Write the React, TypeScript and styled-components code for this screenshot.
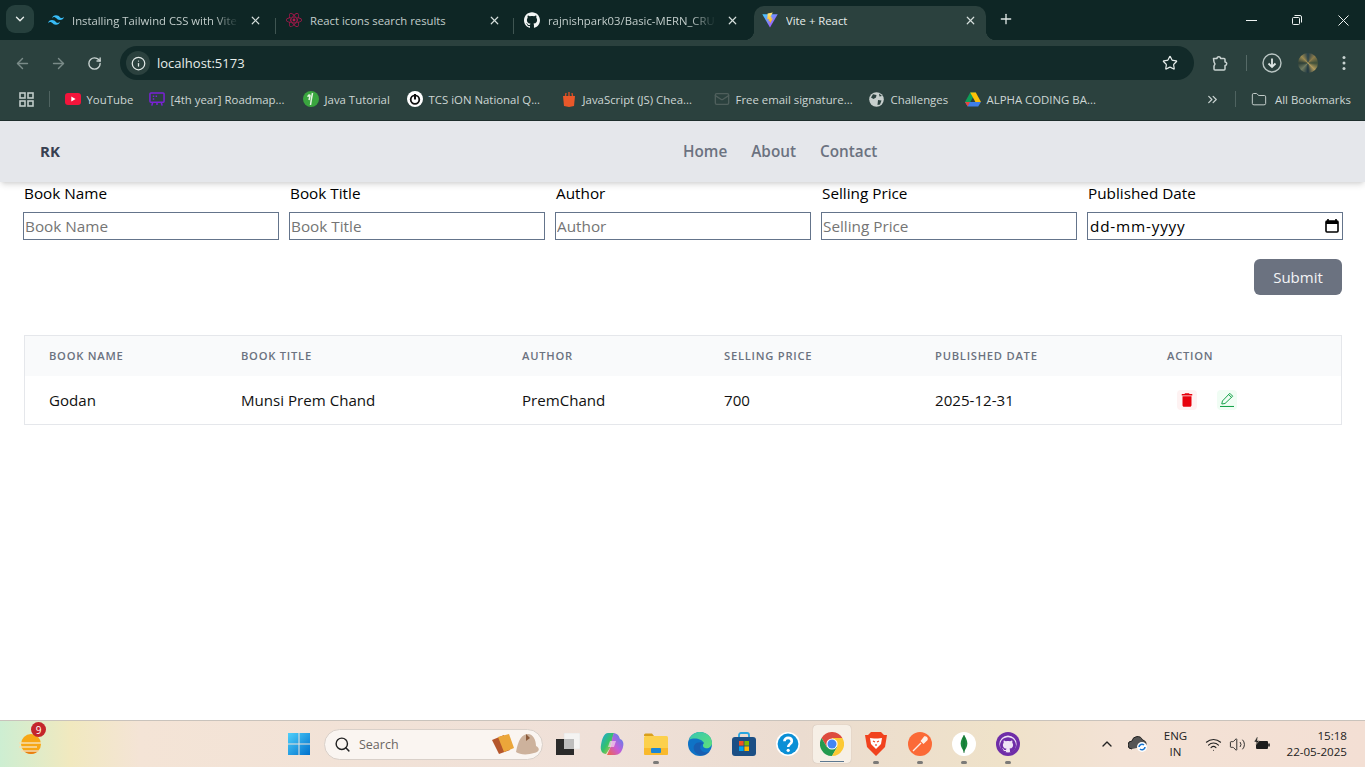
import React from "react";
import styled, { createGlobalStyle } from "styled-components";
import { SiTailwindcss, SiGithub } from "react-icons/si";
import { FaReact } from "react-icons/fa";
import { MdDelete } from "react-icons/md";
import { ChevronDown, X, Plus, ArrowLeft, ArrowRight, RotateCw, Info, Star, ChevronsRight, Folder, Mail, Search, ChevronUp, Wifi, Volume2 } from "lucide-react";

const Global = createGlobalStyle`
  html, body { margin: 0; padding: 0; height: 100%; background: #fff; }
  * { box-sizing: border-box; }
  #root { height: 100%; }
`;
const UI = `"Open Sans", "Noto Sans", sans-serif`;
const Screen = styled.div`display:flex;flex-direction:column;height:767px;overflow:hidden;font-family:${UI};color:#000;`;

/* Browser chrome */
const TabStrip = styled.div`height:40px;background:#0e2625;display:flex;align-items:flex-end;padding-left:6px;`;
const TabMenu = styled.div`width:28px;height:28px;margin:0 4px 7px 0;border-radius:9px;background:#26403d;color:#e8eeec;display:flex;align-items:center;justify-content:center;`;
const Tab = styled.div<{ $active?: boolean; $w: number; $pl?: number; $pr?: number }>`
  position:relative;width:${p => p.$w}px;height:34px;display:flex;align-items:center;padding:0 ${p => p.$pr ?? 9}px 6px ${p => p.$pl ?? 10}px;
  color:${p => p.$active ? "#e6ecea" : "#c2cdcb"};font-size:11.3px;
  background:${p => p.$active ? "#2b413e" : "transparent"};
  border-radius:${p => p.$active ? "10px 10px 0 0" : "0"};
  ${p => p.$active ? `
    &::before,&::after{content:"";position:absolute;bottom:0;width:10px;height:10px;}
    &::before{left:-10px;background:radial-gradient(circle at 0 0,transparent 10px,#2b413e 10.5px);}
    &::after{right:-10px;background:radial-gradient(circle at 100% 0,transparent 10px,#2b413e 10.5px);}` : ""}
`;
const TabIcon = styled.span`width:16px;height:16px;flex:none;display:flex;align-items:center;justify-content:center;margin-right:8px;`;
const TabTitle = styled.span<{ $fade?: boolean }>`flex:1;white-space:nowrap;overflow:hidden;
  ${p => p.$fade ? "mask-image:linear-gradient(90deg,#000 85%,transparent);" : ""}`;
const TabClose = styled.span`width:16px;height:16px;margin-left:8px;display:flex;align-items:center;justify-content:center;color:#d5dedc;flex:none;`;
const TabSep = styled.span`width:1px;height:16px;margin:0 0 6px;background:#3f5552;flex:none;`;
const NewTab = styled.div`width:20px;height:28px;margin:0 0 7px 10px;color:#dfe7e5;display:flex;align-items:center;justify-content:center;`;
const WinControls = styled.div`margin-left:auto;display:flex;height:40px;`;
const WinBtn = styled.div`width:46px;padding-left:2px;display:flex;align-items:center;justify-content:center;color:#eef3f2;`;

const Toolbar = styled.div`height:40px;background:#2b413e;display:flex;align-items:flex-start;padding:6px 0 0 4px;color:#c9d3d1;`;
const ToolBtn = styled.div<{ $dim?: boolean; $ml?: number }>`width:36px;height:34px;margin-left:${p => p.$ml ?? 0}px;display:flex;align-items:center;justify-content:center;color:${p => p.$dim ? "#7a8b88" : "#c9d3d1"};flex:none;`;
const Omnibox = styled.div`width:1074px;height:34px;margin-left:8px;border-radius:17px;background:#122a29;display:flex;align-items:center;padding:0 16px 0 6px;flex:none;`;
const InfoChip = styled.span`width:24px;height:24px;border-radius:50%;background:#2b413e;display:flex;align-items:center;justify-content:center;color:#e2e9e7;`;
const Url = styled.span`margin-left:7px;font-size:13px;color:#e8eeec;flex:1;`;
const ToolSep = styled.span`width:1px;height:16px;background:#566a67;margin:9px 7px 0 8px;flex:none;`;
const Avatar = styled.span`width:20px;height:20px;border-radius:50%;background:conic-gradient(#26404a,#8a7a4a,#3d4f3a,#b09a5c,#1e3640,#6f7a60,#2d3f38,#9c8a50,#26404a);`;

const Bookmarks = styled.div`height:41px;background:#2b413e;display:flex;align-items:center;padding:0 0 2px 19px;color:#cdd6d4;font-size:11.4px;border-bottom:1px solid #1f2f2d;`;
const AppsBtn = styled.span`width:15px;display:flex;color:#c0cbc9;flex:none;`;
const BarSep = styled.span`width:1px;height:16px;background:#4f6360;margin:0 7px 0 14.5px;flex:none;`;
const Bookmark = styled.div<{ $w: number; $gap?: number }>`width:${p => p.$w}px;padding:0 8px;display:flex;align-items:center;gap:${p => p.$gap ?? 6}px;white-space:nowrap;flex:none;overflow:hidden;`;
const BmIcon = styled.span`width:16px;height:16px;display:flex;align-items:center;justify-content:center;flex:none;`;
const Overflow = styled.span`margin-left:99px;width:16px;display:flex;color:#c9d3d1;flex:none;`;

/* Page */
const Nav = styled.nav`height:61px;flex:none;background:#e5e7eb;display:grid;grid-template-columns:643px auto;align-items:center;padding:0 0 2px 40px;box-shadow:0 4px 6px -1px rgba(0,0,0,.12),0 2px 4px -2px rgba(0,0,0,.1);position:relative;z-index:1;`;
const Brand = styled.span`font-size:15px;font-weight:700;color:#374151;`;
const NavLinks = styled.div`display:flex;gap:24px;`;
const NavLink = styled.a`font-size:15.3px;font-weight:600;color:#6b7280;`;
const Main = styled.main`flex:1;background:#fff;padding:0 22px 0 23px;`;
const FormGrid = styled.div`display:grid;grid-template-columns:repeat(5,256px);column-gap:10px;`;
const Field = styled.label`display:flex;flex-direction:column;font-size:15.3px;`;
const FieldName = styled.span`height:22px;margin-bottom:8px;padding-left:1px;line-height:22px;`;
const Input = styled.input`height:28px;width:100%;border:1px solid #64748b;border-radius:0;padding:0 1px;font:15.3px ${UI};outline:none;
  &::placeholder{color:#757575;opacity:1;}`;
const DateBox = styled.div`height:28px;border:1px solid #64748b;display:flex;align-items:center;justify-content:space-between;padding:0 3px 0 2px;font-size:15.3px;letter-spacing:.8px;`;
const Actions = styled.div`display:flex;justify-content:flex-end;padding:19px 1px 40px 0;`;
const Submit = styled.button`width:88px;height:36px;border:0;border-radius:6px;background:#6b7280;color:#f3f4f6;font:500 15px ${UI};`;
const TableWrap = styled.div`margin-left:1px;width:1318px;border:1px solid #e5e7eb;`;
const Table = styled.table`border-collapse:collapse;table-layout:fixed;width:1316px;`;
const Th = styled.th<{ $w: number }>`width:${p => p.$w}px;height:40px;background:#f9fafb;text-align:left;padding:0 0 2px 24px;font-size:11.2px;font-weight:600;letter-spacing:.75px;text-transform:uppercase;color:#6b7280;`;
const Td = styled.td`height:48px;padding:0 0 0 24px;font-size:15.1px;color:#111;`;
const ActionCell = styled.div`display:flex;gap:20px;margin:-1px 0 0 10px;`;
const IconBtn = styled.span<{ $bg: string; $c: string }>`width:20px;height:20px;border-radius:4px;background:${p => p.$bg};color:${p => p.$c};display:flex;align-items:center;justify-content:center;`;

/* Taskbar */
const Taskbar = styled.div`height:47px;flex:none;border-top:1px solid #c9c3bc;display:flex;align-items:center;background:linear-gradient(90deg,#cdeed2 0,#f1e9bf 70px,#f4e4d6 140px,#efe0d8 600px,#ebdcd0 800px,#efe2c9 1000px,#f3e2d5 1120px,#f3dfd4 100%);position:relative;`;
const Weather = styled.div`width:287px;padding-left:19px;flex:none;position:relative;display:flex;`;
const Badge = styled.span`position:absolute;left:31px;top:-10px;width:15px;height:15px;border-radius:50%;background:#c4262b;color:#fff;font-size:10px;display:flex;align-items:center;justify-content:center;`;
const TbIcon = styled.div<{ $w?: number; $active?: boolean; $dot?: boolean }>`position:relative;width:${p => p.$w ?? 44}px;height:38px;flex:none;display:flex;align-items:center;justify-content:center;
  ${p => p.$active ? "background:#f6efe6;border-radius:4px;box-shadow:0 0 1px rgba(0,0,0,.25);margin:0 3px;width:38px;" : ""}
  ${p => p.$dot ? `&::after{content:"";position:absolute;bottom:-1px;left:50%;margin-left:-3px;width:6px;height:3px;border-radius:2px;background:#7b7a78;}` : ""}
`;
const ActiveLine = styled.span`position:absolute;bottom:1px;left:7px;width:24px;height:1.5px;background:#5d7890;`;
const SearchPill = styled.div`width:219px;height:31px;margin:0 3px 0 2px;border-radius:16px;background:#faf5f1;border:1px solid #d9d0c9;display:flex;align-items:center;padding:0 0 0 9px;color:#6a6662;font-size:12.5px;flex:none;gap:8px;position:relative;`;
const PillArt = styled.span`margin-left:auto;display:flex;`;
const Tray = styled.div`margin-left:auto;display:flex;align-items:center;height:100%;color:#222;`;
const Lang = styled.div`width:30px;margin-right:11px;font-size:11.5px;line-height:16px;text-align:center;color:#222;`;
const Clock = styled.div`margin:0 18px 0 13px;font-size:11.6px;line-height:16px;text-align:right;color:#222;`;
const TrayIcon = styled.span<{ $w: number }>`width:${p => p.$w}px;display:flex;justify-content:center;`;

const ViteIcon = () => (
  <svg width="16" height="16" viewBox="0 0 16 16">
    <defs>
      <linearGradient id="vg" x1="0" y1="0" x2="1" y2="1"><stop offset="0" stopColor="#41d1ff" /><stop offset="1" stopColor="#bd34fe" /></linearGradient>
      <linearGradient id="vy" x1="0" y1="0" x2="0" y2="1"><stop offset="0" stopColor="#ffea83" /><stop offset="1" stopColor="#ffa800" /></linearGradient>
    </defs>
    <path d="M0.3 2.2 L15.7 2.2 L8 15.6 Z" fill="url(#vg)" />
    <path d="M10.8 0.4 L5.6 1.4 L5.3 7.5 L7 7.1 L6.6 9.4 L8.1 9 L7.7 12 L11 6.3 L9.2 6.7 L9.7 4.7 L8.4 4.9 Z" fill="url(#vy)" />
  </svg>
);
const Youtube = () => (
  <svg width="16" height="12" viewBox="0 0 16 12"><rect width="16" height="12" rx="3" fill="#f4143b" /><path d="M6.3 3.4 L10.6 6 L6.3 8.6 Z" fill="#fff" /></svg>
);
const Roadmap = () => (
  <svg width="17" height="16" viewBox="0 0 17 16" fill="none" stroke="#7a22d6" strokeWidth="1.6"><rect x="1" y="1.5" width="15" height="10" rx="1" /><path d="M4 11.5 L3 15 M8.5 11.5 V14.5 M13 11.5 L14 15" /><path d="M4 5 h1.6 M7 5 h1.6 M4 8 h1.6" /></svg>
);
const JavaIcon = () => (
  <svg width="16" height="16" viewBox="0 0 16 16"><circle cx="8" cy="8" r="8" fill="#3aa53f" /><path d="M9.5 2 L8.4 8 L7.5 14 M5 6 C5 3.5 7 3.5 7 5 L6 9" stroke="#e9f5e6" strokeWidth="1.5" fill="none" /></svg>
);
const Tcs = () => (
  <svg width="16" height="16" viewBox="0 0 16 16"><circle cx="8" cy="8" r="8" fill="#fff" /><circle cx="8" cy="8.6" r="4.3" fill="none" stroke="#111" strokeWidth="1.8" /><path d="M8 3 V8.4" stroke="#111" strokeWidth="2" /></svg>
);
const JsIcon = () => (
  <svg width="16" height="16" viewBox="0 0 16 16"><path d="M2 5 H14 L13 15 L8 16 L3 15 Z" fill="#e9582a" /><path d="M4.5 5 L5 2 M8 5 V1 M11.5 5 L11 2" stroke="#d94d22" strokeWidth="1.4" /></svg>
);
const Globe = () => (
  <svg width="15" height="15" viewBox="0 0 15 15"><circle cx="7.5" cy="7.5" r="7.3" fill="#c7cfcd" /><path d="M4 2.2 L7.5 3 L7 5.5 L4.5 7 L2 5.5 Z M9 8 L12.5 8.5 L11 12.5 L8.5 13 Z M10 1.5 L13 4 L10.5 4.5 Z" fill="#2b413e" /></svg>
);
const Drive = () => (
  <svg width="16" height="15" viewBox="0 0 16 15"><path d="M5.2 0.5 H10.8 L7.9 5.6 L5.3 10 H0 Z" fill="#0f9d58" /><path d="M5.2 0.5 H10.8 L16 10 H10.4 Z" fill="#ffc107" /><path d="M0 10 L5.3 10 H16 L13.2 14.6 H2.7 Z" fill="#3f7ee8" /><path d="M0 10 H5 L2.7 14.6 Z" fill="#e8453c" /></svg>
);
const WinLogo = () => (
  <svg width="22" height="22" viewBox="0 0 22 22"><defs><linearGradient id="w" x1="0" y1="0" x2="1" y2="1"><stop offset="0" stopColor="#4fd0fb" /><stop offset="1" stopColor="#0070cc" /></linearGradient></defs><path d="M0 0h10.5v10.5H0zM11.5 0H22v10.5H11.5zM0 11.5h10.5V22H0zM11.5 11.5H22V22H11.5z" fill="url(#w)" /></svg>
);
const WeatherIcon = () => (
  <svg width="24" height="24" viewBox="0 0 24 24"><circle cx="12" cy="12" r="10" fill="#f7a716" /><path d="M12 22 a10 10 0 0 0 8-4 H4 a10 10 0 0 0 8 4z" fill="#ea7f10" /><path d="M0 11 H22 M0 15 H18 M2 19 H20" stroke="#f6dfb0" strokeWidth="1.4" /></svg>
);
const TaskView = () => (
  <svg width="24" height="22" viewBox="0 0 24 22"><rect x="8" y="0" width="16" height="16" fill="#f4f3f2" stroke="#ddd" strokeWidth=".5" /><rect x="0" y="6" width="18" height="16" fill="#2a2a2a" /><rect x="8" y="6" width="10" height="10" fill="#bdbdbd" /></svg>
);
const Copilot = () => (
  <svg width="24" height="24" viewBox="0 0 24 24"><defs><linearGradient id="c1" x1="0" y1="0" x2="1" y2="1"><stop offset="0" stopColor="#1fa3e0" /><stop offset=".5" stopColor="#34c26c" /><stop offset="1" stopColor="#f6c338" /></linearGradient><linearGradient id="c2" x1="1" y1="0" x2="0" y2="1"><stop offset="0" stopColor="#3e8bf0" /><stop offset=".55" stopColor="#c85bd8" /><stop offset="1" stopColor="#f0683f" /></linearGradient></defs><path d="M8 1 H14 L10 16 L6 22 C2 22 0 18 1 13 C2 7 4 1 8 1Z" fill="url(#c1)" /><path d="M14 1 C18 2 19 4 20 7 C23 8 24 11 23 15 C22 20 19 23 15 23 H7 L11 14 C12 9 12 4 14 1Z" fill="url(#c2)" /><path d="M10 9 H16 L14 15 H8Z" fill="#f4d7ee" opacity=".7" /></svg>
);
const Files = () => (
  <svg width="24" height="22" viewBox="0 0 24 22"><path d="M0 2 a1.5 1.5 0 0 1 1.5-1.5 H8 L10 3 H0Z" fill="#d99f1c" /><rect y="3" width="24" height="19" rx="1.5" fill="#fcd04c" /><path d="M0 15 H24 V20.5 A1.5 1.5 0 0 1 22.5 22 H1.5 A1.5 1.5 0 0 1 0 20.5Z" fill="#f9b92c" /><rect x="7" y="15" width="10" height="5" rx="1" fill="#1a86d6" /></svg>
);
const Edge = () => (
  <svg width="24" height="24" viewBox="0 0 24 24"><defs><linearGradient id="e1" x1="0" y1="0" x2="1" y2="1"><stop offset="0" stopColor="#37c7b1" /><stop offset="1" stopColor="#5fe07a" /></linearGradient></defs><circle cx="12" cy="12" r="12" fill="#0f73c6" /><path d="M1 8 C3 2 8 0 12 0 C19 0 24 5 24 11 C24 15 20 17 17 16 C14 15 15 12 16 11 C14 7 6 5 1 8Z" fill="url(#e1)" /><path d="M16 11 C13 12 11 15 13 18 C15 21 20 21 22 19 C19 24 11 25 7 20 C4 16 6 8 16 11Z" fill="#1c56a8" opacity=".7" /></svg>
);
const Store = () => (
  <svg width="24" height="24" viewBox="0 0 24 24"><path d="M7 6 V3 a2 2 0 0 1 2-2 h6 a2 2 0 0 1 2 2 V6" fill="none" stroke="#28a6e0" strokeWidth="1.8" /><rect y="5" width="24" height="19" rx="3" fill="#1b4f85" /><rect x="7" y="9" width="4.6" height="4.6" fill="#f25022" /><rect x="12.4" y="9" width="4.6" height="4.6" fill="#7fba00" /><rect x="7" y="14.4" width="4.6" height="4.6" fill="#00a4ef" /><rect x="12.4" y="14.4" width="4.6" height="4.6" fill="#ffb900" /></svg>
);
const Help = () => (
  <svg width="24" height="24" viewBox="0 0 24 24"><circle cx="12" cy="12" r="12" fill="#fff" /><circle cx="12" cy="12" r="10.4" fill="#0a8fd6" /><path d="M8.4 9.2 C8.4 4.8 15.8 4.8 15.8 9.2 C15.8 12 12.2 12 12.2 15" fill="none" stroke="#fff" strokeWidth="2.6" /><circle cx="12.2" cy="18.3" r="1.6" fill="#fff" /></svg>
);
const Chrome = () => (
  <svg width="24" height="24" viewBox="0 0 24 24"><path d="M12 12 L22.4 6 A12 12 0 0 0 1.6 6 L6.8 15Z" fill="#dd4b3e" /><path d="M12 12 L6.8 15 L1.6 6 A12 12 0 0 0 12 24 L17.2 15Z" fill="#249a4f" /><path d="M12 12 L17.2 15 L12 24 A12 12 0 0 0 22.4 6 L12 6Z" fill="#fcc934" /><circle cx="12" cy="12" r="5.6" fill="#fff" /><circle cx="12" cy="12" r="4.5" fill="#4285f4" /></svg>
);
const Mongo = () => (
  <svg width="24" height="24" viewBox="0 0 24 24"><circle cx="12" cy="12" r="12" fill="#fff" /><path d="M12 3 C9 7 8 11 9 14 C10 17 11.5 18 12 21 C12.5 18 14 17 15 14 C16 11 15 7 12 3Z" fill="#1c8a3e" /><path d="M12 3 V21" stroke="#0d5a28" strokeWidth=".6" /></svg>
);
const GithubApp = () => (
  <svg width="24" height="24" viewBox="0 0 24 24"><circle cx="12" cy="12" r="12" fill="#6f2da8" /><circle cx="12" cy="12" r="8.6" fill="#efe3f5" /><foreignObject x="4" y="4" width="16" height="16"><SiGithub size={16} color="#6f2da8" /></foreignObject></svg>
);
const Postman = () => (
  <svg width="24" height="24" viewBox="0 0 24 24"><circle cx="12" cy="12" r="12" fill="#fb6a37" /><path d="M5 19 L13 11 M13.5 9 L15.5 11 L19 7.5 C19.5 6 18 4.5 16.5 5Z" stroke="#fdeee6" strokeWidth="1.4" fill="#fdeee6" /></svg>
);
const Brave = () => (
  <svg width="22" height="24" viewBox="0 0 22 24"><path d="M6 0 H16 L19 3 L22 3 L20 15 L11 24 L2 15 L0 3 L3 3Z" fill="#f1421e" /><path d="M5 6 L9 6.5 H13 L17 6 L16 12 L13 15 L11 17 L9 15 L6 12Z" fill="#fff" /><path d="M8 9 L10 10 M14 9 L12 10 M11 12 V14" stroke="#f1421e" strokeWidth="1.2" /></svg>
);
const PencilLine = () => (
  <svg width="14" height="15" viewBox="0 0 14 15" fill="none" stroke="#16a34a" strokeWidth="1"><path d="M9.8 1.3 L12.7 4.2 L5 11.5 L1.8 12 L2.4 9Z" /><path d="M8.6 2.5 L11.4 5.3" /><path d="M0 14.5 H14" strokeWidth="1.1" /></svg>
);
const CalendarIcon = () => (
  <svg width="14" height="14" viewBox="0 0 14 14"><path d="M3 0 V2 M11 0 V2" stroke="#000" strokeWidth="1.6" /><rect x="1" y="2" width="12" height="11" rx="1" fill="none" stroke="#000" strokeWidth="1.6" /><rect x="1" y="2" width="12" height="3" fill="#000" /></svg>
);
const MinimizeIcon = () => <svg width="11" height="11" viewBox="0 0 11 11"><path d="M0 5.5 H11" stroke="#eef3f2" strokeWidth="1" /></svg>;
const RestoreIcon = () => (
  <svg width="10" height="10" viewBox="0 0 10 10" fill="none" stroke="#eef3f2" strokeWidth="1"><rect x=".5" y="2.5" width="7" height="7" rx="1" /><path d="M2.5 .5 H8 a1.5 1.5 0 0 1 1.5 1.5 V7.5" /></svg>
);
const CloseIcon = () => <svg width="11" height="11" viewBox="0 0 11 11"><path d="M.5 .5 L10.5 10.5 M10.5 .5 L.5 10.5" stroke="#eef3f2" strokeWidth="1" /></svg>;
const ExtensionIcon = () => (
  <svg width="16" height="16" viewBox="0 0 16 16" fill="none" stroke="#c9d3d1" strokeWidth="1.5" strokeLinejoin="round"><path d="M1.5 3.5 H5 a1.8 1.8 0 0 1 3.6 0 H12 a1 1 0 0 1 1 1 V7 a1.7 1.7 0 0 1 0 3.4 V14 a1 1 0 0 1-1 1 H3 a1 1 0 0 1-1-1 V11 L3 9 L2 7 Z" /></svg>
);
const DownloadIcon = () => (
  <svg width="20" height="20" viewBox="0 0 20 20" fill="none" stroke="#b9c5c3" strokeWidth="1.4"><circle cx="10" cy="10" r="9" /><path d="M10 5.5 V14 M6.5 10.5 L10 14 L13.5 10.5" strokeWidth="1.8" stroke="#dfe7e5" /></svg>
);
const DotsIcon = () => <svg width="4" height="16" viewBox="0 0 4 16" fill="#c9d3d1"><circle cx="2" cy="2.5" r="1.5" /><circle cx="2" cy="8" r="1.5" /><circle cx="2" cy="13.5" r="1.5" /></svg>;
const AppsIcon = () => (
  <svg width="15" height="15" viewBox="0 0 15 15" fill="none" stroke="#c0cbc9" strokeWidth="1.6"><rect x="1" y="1" width="5" height="5" /><rect x="9" y="1" width="5" height="5" /><rect x="1" y="9" width="5" height="5" /><rect x="9" y="9" width="5" height="5" /></svg>
);
const CloudSync = () => (
  <svg width="20" height="16" viewBox="0 0 20 16"><path d="M4 13 a4 4 0 0 1 0-8 a5.5 5.5 0 0 1 10.5-1 a4 4 0 0 1 3 6" fill="#555" stroke="#222" /><circle cx="14" cy="11" r="5" fill="#fff" /><path d="M11 11 a3 3 0 0 1 5-2 M17 11 a3 3 0 0 1-5 2" stroke="#1976d2" strokeWidth="1.6" fill="none" /></svg>
);
const Battery = () => (
  <svg width="17" height="14" viewBox="0 0 17 14"><rect x="3" y="4" width="12" height="8" rx="1" fill="#1c1c1c" /><rect x="15.2" y="6.5" width="1.6" height="3" fill="#1c1c1c" /><path d="M4 0 L1 5 H3.5 L2.5 8 L6.5 3.5 H4 L5 0Z" fill="#1c1c1c" stroke="#f3e2d5" strokeWidth=".5" /></svg>
);
const PillArtwork = () => (
  <svg width="52" height="24" viewBox="0 0 52 24"><path d="M2 8 L14 3 L20 18 L9 22Z" fill="#b5562b" /><path d="M8 5 L19 2 L24 16 L14 20Z" fill="#eba63a" /><path d="M26 20 C28 8 32 2 38 2 C43 2 46 8 46 14 C50 16 50 20 44 21 C38 23 30 23 26 20Z" fill="#cdb29c" /><path d="M36 2 L40 6 L36 9Z" fill="#8a5a3a" /></svg>
);

const bookmarks = [
  { w: 84, icon: <Youtube />, label: "YouTube" },
  { w: 154, icon: <Roadmap />, label: "[4th year] Roadmap..." },
  { w: 104, icon: <JavaIcon />, label: "Java Tutorial" },
  { w: 154, icon: <Tcs />, label: "TCS iON National Q..." },
  { w: 153, icon: <JsIcon />, label: "JavaScript (JS) Chea..." },
  { w: 155, icon: <Mail size={16} color="#4f5f5c" />, label: "Free email signature..." },
  { w: 96, icon: <Globe />, label: "Challenges" },
  { w: 149, icon: <Drive />, label: "ALPHA CODING BA..." },
];
const fields = ["Book Name", "Book Title", "Author", "Selling Price"];
const columns = [
  { label: "Book Name", w: 192 }, { label: "Book Title", w: 281 }, { label: "Author", w: 202 },
  { label: "Selling Price", w: 211 }, { label: "Published Date", w: 232 }, { label: "Action", w: 198 },
];
const row = ["Godan", "Munsi Prem Chand", "PremChand", "700", "2025-12-31"];

export default function App() {
  return (
    <Screen>
      <Global />
      <TabStrip>
        <TabMenu><ChevronDown size={14} strokeWidth={2.4} /></TabMenu>
        <Tab $w={237} $pr={12}>
          <TabIcon><SiTailwindcss size={16} color="#38bdf8" /></TabIcon>
          <TabTitle $fade>Installing Tailwind CSS with Vite</TabTitle>
          <TabClose><X size={13} strokeWidth={2.2} /></TabClose>
        </Tab>
        <TabSep />
        <Tab $w={237} $pr={11}>
          <TabIcon><FaReact size={16} color="#b5164f" /></TabIcon>
          <TabTitle>React icons search results</TabTitle>
          <TabClose><X size={13} strokeWidth={2.2} /></TabClose>
        </Tab>
        <TabSep />
        <Tab $w={240} $pr={14}>
          <TabIcon><SiGithub size={16} color="#f2f5f4" /></TabIcon>
          <TabTitle $fade>rajnishpark03/Basic-MERN_CRUD</TabTitle>
          <TabClose><X size={13} strokeWidth={2.2} /></TabClose>
        </Tab>
        <Tab $active $w={232} $pl={8} $pr={8}>
          <TabIcon><ViteIcon /></TabIcon>
          <TabTitle>Vite + React</TabTitle>
          <TabClose><X size={13} strokeWidth={2.2} /></TabClose>
        </Tab>
        <NewTab><Plus size={16} strokeWidth={2} /></NewTab>
        <WinControls>
          <WinBtn><MinimizeIcon /></WinBtn>
          <WinBtn><RestoreIcon /></WinBtn>
          <WinBtn><CloseIcon /></WinBtn>
        </WinControls>
      </TabStrip>
      <Toolbar>
        <ToolBtn $dim><ArrowLeft size={17} /></ToolBtn>
        <ToolBtn $dim><ArrowRight size={17} /></ToolBtn>
        <ToolBtn><RotateCw size={15} strokeWidth={2.2} /></ToolBtn>
        <Omnibox>
          <InfoChip><Info size={15} /></InfoChip>
          <Url>localhost:5173</Url>
          <Star size={16} color="#e6ecea" strokeWidth={1.8} />
        </Omnibox>
        <ToolBtn $ml={8}><ExtensionIcon /></ToolBtn>
        <ToolSep />
        <ToolBtn><DownloadIcon /></ToolBtn>
        <ToolBtn><Avatar /></ToolBtn>
        <ToolBtn><DotsIcon /></ToolBtn>
      </Toolbar>
      <Bookmarks>
        <AppsBtn><AppsIcon /></AppsBtn>
        <BarSep />
        {bookmarks.map(b => (
          <Bookmark key={b.label} $w={b.w}><BmIcon>{b.icon}</BmIcon>{b.label}</Bookmark>
        ))}
        <Overflow><ChevronsRight size={15} /></Overflow>
        <BarSep />
        <Bookmark $w={130} $gap={8}><BmIcon><Folder size={17} strokeWidth={1.4} /></BmIcon>All Bookmarks</Bookmark>
      </Bookmarks>

      <Nav>
        <Brand>RK</Brand>
        <NavLinks><NavLink>Home</NavLink><NavLink>About</NavLink><NavLink>Contact</NavLink></NavLinks>
      </Nav>
      <Main>
        <FormGrid>
          {fields.map(f => (
            <Field key={f}><FieldName>{f}</FieldName><Input placeholder={f} /></Field>
          ))}
          <Field><FieldName>Published Date</FieldName><DateBox>dd-mm-yyyy<CalendarIcon /></DateBox></Field>
        </FormGrid>
        <Actions><Submit>Submit</Submit></Actions>
        <TableWrap>
          <Table>
            <thead><tr>{columns.map(c => <Th key={c.label} $w={c.w}>{c.label}</Th>)}</tr></thead>
            <tbody><tr>
              {row.map(v => <Td key={v}>{v}</Td>)}
              <Td><ActionCell>
                <IconBtn $bg="#fef2f2" $c="#e7000b"><MdDelete size={18} /></IconBtn>
                <IconBtn $bg="#f0fdf4" $c="#16a34a"><PencilLine /></IconBtn>
              </ActionCell></Td>
            </tr></tbody>
          </Table>
        </TableWrap>
      </Main>

      <Taskbar>
        <Weather><WeatherIcon /><Badge>9</Badge></Weather>
        <TbIcon $w={24}><WinLogo /></TbIcon>
        <TbIcon $w={11} />
        <SearchPill><Search size={17} color="#222" strokeWidth={2} />Search
          <PillArt><PillArtwork /></PillArt>
        </SearchPill>
        <TbIcon><TaskView /></TbIcon>
        <TbIcon><Copilot /></TbIcon>
        <TbIcon $dot><Files /></TbIcon>
        <TbIcon><Edge /></TbIcon>
        <TbIcon><Store /></TbIcon>
        <TbIcon><Help /></TbIcon>
        <TbIcon $active><Chrome /><ActiveLine /></TbIcon>
        <TbIcon $dot><Brave /></TbIcon>
        <TbIcon $dot><Postman /></TbIcon>
        <TbIcon $dot><Mongo /></TbIcon>
        <TbIcon $dot><GithubApp /></TbIcon>
        <Tray>
          <TrayIcon $w={16}><ChevronUp size={16} /></TrayIcon>
          <TrayIcon $w={46}><CloudSync /></TrayIcon>
          <Lang>ENG<br />IN</Lang>
          <TrayIcon $w={24}><Wifi size={17} strokeWidth={1.5} /></TrayIcon>
          <TrayIcon $w={24}><Volume2 size={17} strokeWidth={1.3} /></TrayIcon>
          <TrayIcon $w={24}><Battery /></TrayIcon>
          <Clock>15:18<br />22-05-2025</Clock>
        </Tray>
      </Taskbar>
    </Screen>
  );
}
